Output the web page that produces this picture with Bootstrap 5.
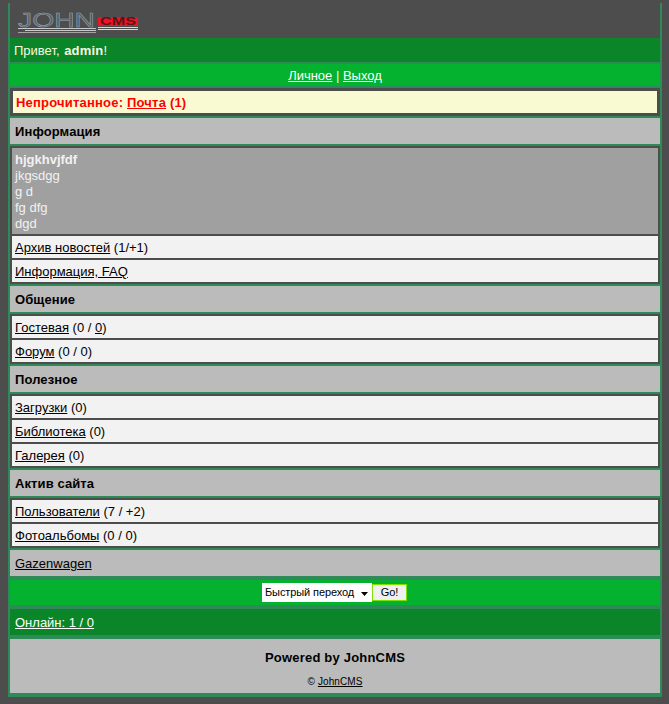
<!DOCTYPE html>
<html lang="ru">
<head>
<meta charset="utf-8">
<title>JohnCMS</title>
<link href="https://cdn.jsdelivr.net/npm/bootstrap@5.3.0/dist/css/bootstrap.min.css" rel="stylesheet">
<style>
html,body{background:#4d4d4d;}
body{margin:0;font-family:"Liberation Sans",Arial,sans-serif;font-size:13px;line-height:16px;color:#000;}
a{color:inherit;}
.shell{margin:3px 7px 7px 8px;border-left:2px solid #2e8b57;border-right:2px solid #2e8b57;background:#2e8b57;}
.logobar{background:#4d4d4d;height:35px;padding:3px 0 0 7px;}
.logobar svg{display:block;}
.greet{background:#0a8528;color:#f6fbe0;padding:5px 4px 3px;}
.greet b{letter-spacing:.2px;margin-left:1px;}
.usermenu{background:#04b22f;color:#fafad2;padding:4px 3px 2px;margin-top:2px;text-align:center;}
.usermenu a{color:#fff;}
.unread{margin-top:2px;border:3px solid #4d4d4d;background:#fafad2;color:#f00;font-weight:700;padding:4px 3px 2px;letter-spacing:.2px;}
.sect{background:#bbb;padding:6px 5px 4px;font-weight:700;color:#000;margin-top:2px;letter-spacing:.1px;}
.group{margin-top:2px;background:#4d4d4d;padding:2px 2px;display:flex;flex-direction:column;gap:2px;}
.entry{background:#f2f2f2;padding:4px 3px 2px;}
.news{background:#a0a0a0;color:#f2f2f2;padding:4px 3px 2px;}
.plain{background:#bbb;padding:6px 5px 4px;margin-top:2px;}
.jump{background:#04b22f;margin-top:4px;height:25px;padding-right:1px;}
.jump select{width:110px;height:19px;padding:0 0 0 3px;border:0;border-radius:0;font:11px/19px "Liberation Sans",Arial,sans-serif;letter-spacing:-.1px;color:#000;background-color:#fff;background-image:url("data:image/svg+xml,%3Csvg xmlns='http://www.w3.org/2000/svg' width='7' height='4'%3E%3Cpath d='M0 0h7L3.500 4z'/%3E%3C/svg%3E");background-size:7px 4px;background-position:99px 9px;background-repeat:no-repeat;appearance:none;}
.jump .btn{width:35px;height:17px;padding:0;border:1px solid #7fe000;border-radius:0;background:#f0f0f0;color:#000;font:11px/15px "Liberation Sans",Arial,sans-serif;}
.online{background:#0a8528;color:#fff;padding:6px 5px 4px;margin-top:4px;}
.foot{background:#bbb;margin-top:4px;height:54px;padding-top:11px;text-align:center;}
.foot b{display:block;letter-spacing:.2px;}
.foot small{display:block;margin-top:10px;font-size:10px;line-height:12px;letter-spacing:.1px;}
.tail{height:4px;}
</style>
</head>
<body>
<div class="shell">
  <div class="logobar">
    <svg width="125" height="30" viewBox="0 0 125 30" role="img" aria-label="JohnCMS">
      <defs><linearGradient id="lg" x1="0" y1="0" x2="1" y2="0"><stop offset="0" stop-color="#56697d"/><stop offset="1" stop-color="#4a5560"/></linearGradient></defs>
      <text x="1" y="21" font-family="Liberation Sans" font-size="21" textLength="77" lengthAdjust="spacingAndGlyphs" fill="url(#lg)" stroke="#9aa2aa" stroke-width=".5">JOHN</text>
      <g fill="#c9c9c9"><rect x="1" y="22" width="78" height="1"/><rect x="8" y="24" width="71" height="1"/><rect x="1" y="26" width="78" height="1" opacity=".7"/></g>
      <rect x="81" y="11" width="40" height="9" fill="#ee1522"/>
      <text x="83" y="19" font-family="Liberation Sans" font-size="10" font-weight="700" textLength="36" lengthAdjust="spacingAndGlyphs" fill="#5a1419">CMS</text>
      <g fill="#d8d8d8"><rect x="81" y="21" width="40" height="1"/><rect x="81" y="23" width="40" height="1"/></g>
    </svg>
  </div>
  <div class="greet">Привет, <b>admin</b>!</div>
  <div class="usermenu"><a href="#">Личное</a> | <a href="#">Выход</a></div>
  <div class="unread">Непрочитанное: <a href="#">Почта</a> (1)</div>
  <div class="sect">Информация</div>
  <div class="group">
    <div class="news"><b>hjgkhvjfdf</b><br>jkgsdgg<br>g d<br>fg dfg<br>dgd</div>
    <div class="entry"><a href="#">Архив новостей</a> (1/+1)</div>
    <div class="entry"><a href="#">Информация, FAQ</a></div>
  </div>
  <div class="sect">Общение</div>
  <div class="group">
    <div class="entry"><a href="#">Гостевая</a> (0 / <a href="#">0</a>)</div>
    <div class="entry"><a href="#">Форум</a> (0 / 0)</div>
  </div>
  <div class="sect">Полезное</div>
  <div class="group">
    <div class="entry"><a href="#">Загрузки</a> (0)</div>
    <div class="entry"><a href="#">Библиотека</a> (0)</div>
    <div class="entry"><a href="#">Галерея</a> (0)</div>
  </div>
  <div class="sect">Актив сайта</div>
  <div class="group">
    <div class="entry"><a href="#">Пользователи</a> (7 / +2)</div>
    <div class="entry"><a href="#">Фотоальбомы</a> (0 / 0)</div>
  </div>
  <div class="plain"><a href="#">Gazenwagen</a></div>
  <form class="jump d-flex justify-content-center align-items-center">
    <select class="form-select" aria-label="Быстрый переход"><option>Быстрый переход</option></select>
    <button type="button" class="btn">Go!</button>
  </form>
  <div class="online"><a href="#">Онлайн: 1 / 0</a></div>
  <div class="foot"><b>Powered by JohnCMS</b><small>© <a href="#">JohnCMS</a></small></div>
  <div class="tail"></div>
</div>
</body>
</html>
